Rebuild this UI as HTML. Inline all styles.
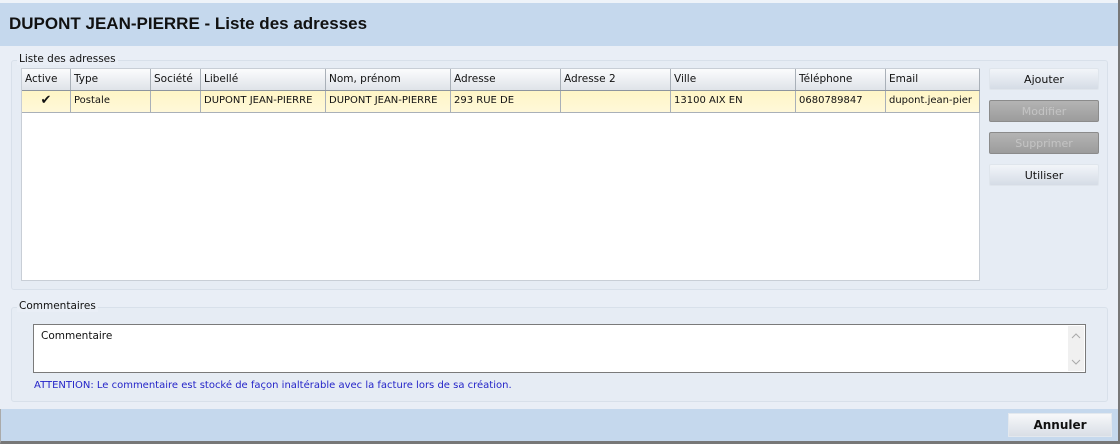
<!DOCTYPE html>
<html><head><meta charset="utf-8"><style>
*{box-sizing:border-box;margin:0;padding:0}
body{width:1120px;height:444px;overflow:hidden;background:#e9eef6;font-family:"DejaVu Sans","Liberation Sans",sans-serif;font-size:11px;color:#111;position:relative}
.abs{position:absolute}
#title{left:0;top:0;width:1120px;height:46px;background:#c5d8ed;border-top:3px solid #eef3f9}
#title span{position:absolute;left:9px;top:11px;font-family:"Liberation Sans",sans-serif;font-size:17px;font-weight:bold}
.grp{border:1px solid #d8e0ea;border-radius:3px;background:#e6ecf4}
.lbl{font-size:10.5px;background:#e9eef6;padding:0 2px}
#grid{left:21px;top:68px;width:959px;height:213px;background:#fff;border:1px solid #c8ced6}
.row{position:absolute;left:0;height:22px;display:flex}
.row div{border-right:1px solid #a9b0b8;padding:4px 3px 0 3px;white-space:nowrap;overflow:hidden;font-size:10.5px}
.hdr{top:0;background:linear-gradient(#fbfcfd,#dfe3e9);border-bottom:1px solid #8e959e}
.dat{top:22px;height:22px;background:linear-gradient(#fff6c6,#fff8d9);border-bottom:1px solid #a9b0b8}
.dat div{font-size:10px;padding-top:4px}
.btn{position:absolute;left:989px;width:110px;height:22px;border-radius:2px;text-align:center;line-height:21px;font-size:11px;background:linear-gradient(#f2f5f9,#d5dce6);border:1px solid #dfe5ec}
.dis{background:linear-gradient(#b4b4b4,#9c9c9c);border:1px solid #8b8b8b;color:#c4c4c4}
</style></head><body>
<div class="abs" id="title"><span>DUPONT JEAN-PIERRE - Liste des adresses</span></div>
<div class="abs grp" style="left:11px;top:60px;width:1097px;height:230px"></div>
<div class="abs lbl" style="left:17px;top:53px">Liste des adresses</div>
<div class="abs" id="grid">
<div class="row hdr">
<div style="width:49px">Active</div><div style="width:80px">Type</div><div style="width:50px">Société</div><div style="width:125px">Libellé</div><div style="width:125px">Nom, prénom</div><div style="width:110px">Adresse</div><div style="width:110px">Adresse 2</div><div style="width:125px">Ville</div><div style="width:90px">Téléphone</div><div style="width:94px;border-right:1px solid #a9b0b8">Email</div>
</div>
<div class="row dat">
<div style="width:49px;text-align:center;font-size:13px;padding-top:2px">✔</div><div style="width:80px">Postale</div><div style="width:50px"></div><div style="width:125px">DUPONT JEAN-PIERRE</div><div style="width:125px">DUPONT JEAN-PIERRE</div><div style="width:110px">293 RUE DE</div><div style="width:110px"></div><div style="width:125px">13100 AIX EN</div><div style="width:90px">0680789847</div><div style="width:94px">dupont.jean-pier</div>
</div>
</div>
<div class="btn" style="top:68px">Ajouter</div>
<div class="btn dis" style="top:100px">Modifier</div>
<div class="btn dis" style="top:132px">Supprimer</div>
<div class="btn" style="top:164px">Utiliser</div>
<div class="abs grp" style="left:11px;top:307px;width:1097px;height:95px"></div>
<div class="abs lbl" style="left:17px;top:300px">Commentaires</div>
<div class="abs" style="left:33px;top:324px;width:1053px;height:49px;background:#fff;border:1px solid #7a7a7a">
<div class="abs" style="left:7px;top:5px;font-size:10.5px">Commentaire</div>
<div class="abs" style="right:1px;top:1px;width:16px;height:45px;background:#f0f0f0"><svg width="16" height="45"><path d="M4 12l4-4 4 4M4 34l4 4 4-4" fill="none" stroke="#aaa" stroke-width="1"/></svg></div>
</div>
<div class="abs" style="left:34px;top:380px;color:#2424c8;font-size:10px">ATTENTION: Le commentaire est stocké de façon inaltérable avec la facture lors de sa création.</div>
<div class="abs" style="left:0;top:409px;width:1120px;height:35px;background:#c5d8ed;border-right:2px solid #777;border-bottom:3px solid #777;border-left:1px solid #aaa"></div>
<div class="abs" style="left:1008px;top:413px;width:104px;height:24px;background:linear-gradient(#f7f8fa,#d9dee6);border:1px solid #e3e8ee;text-align:center;line-height:23px;font-weight:bold;font-size:12px">Annuler</div>
<div class="abs" style="left:1118px;top:0;width:2px;height:444px;background:#777"></div>
</body></html>
